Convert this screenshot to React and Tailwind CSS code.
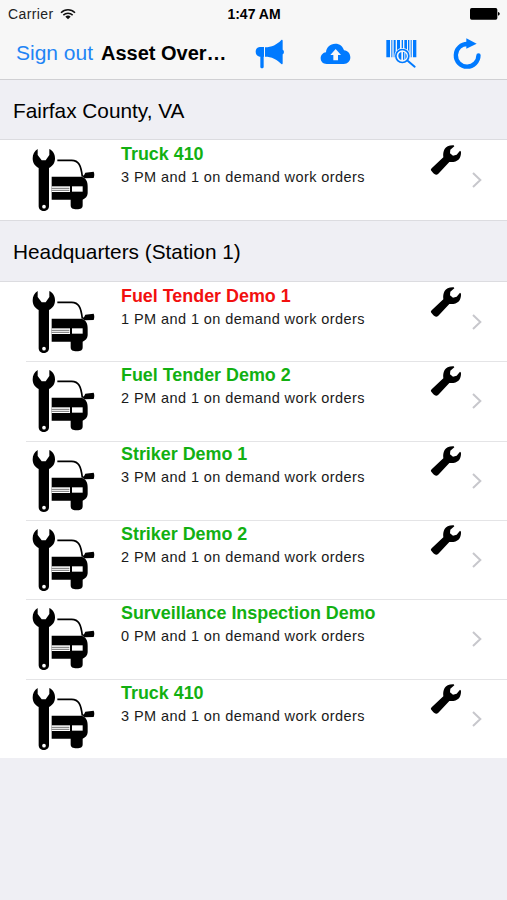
import React from 'react';

const sections = [
    {
        title: 'Fairfax County, VA',
        assets: [{ name: 'Truck 410', pm: 3, onDemand: 1, wrench: true }],
    },
    {
        title: 'Headquarters (Station 1)',
        assets: [
            { name: 'Fuel Tender Demo 1', pm: 1, onDemand: 1, wrench: true, overdue: true },
            { name: 'Fuel Tender Demo 2', pm: 2, onDemand: 1, wrench: true },
            { name: 'Striker Demo 1', pm: 3, onDemand: 1, wrench: true },
            { name: 'Striker Demo 2', pm: 2, onDemand: 1, wrench: true },
            { name: 'Surveillance Inspection Demo', pm: 0, onDemand: 1, wrench: false },
            { name: 'Truck 410', pm: 3, onDemand: 1, wrench: true },
        ],
    },
];

function WifiIcon() {
    return (
        <svg className="ml-[6px] h-[12px] w-[16px]" viewBox="0 0 48 36" fill="none" stroke="#111" strokeWidth="4.5">
            <path d="M3 14C15 2 33 2 45 14" />
            <path d="M10 21.500C18 14 30 14 38 21.500" />
            <path d="M16 26C21 21.500 27 21.500 32 26L24 34Z" fill="#111" stroke="none" />
        </svg>
    );
}

function BatteryIcon() {
    return (
        <svg className="h-[12px] w-[30px]" viewBox="0 0 90 36">
            <rect x="0" y="0" width="82" height="35" rx="5" fill="#000" />
            <path d="M84 12C91 13 91 22 84 23Z" fill="#000" />
        </svg>
    );
}

function MegaphoneIcon() {
    return (
        <svg className="h-[30px] w-[30px]" viewBox="46 29 90 90" fill="#007aff">
            <path d="M73 53H60C44 54 44 81 60 82H62V113C62 118 72 118 72 113V82H73Z" />
            <path d="M76 54C96 54 112 46 125 32C127 30 129 31 129 34V61C134 63 134 73 129 75V102C129 105 127 106 125 104C112 90 96 82 76 82Z" />
        </svg>
    );
}

function CloudUploadIcon() {
    return (
        <svg className="h-[22px] w-[31px]" viewBox="241 41 93 66">
            <path
                d="M261 104C249 104 243 96 243 87C243 77 250 70 259 69C260 54 271 43 287 43C300 43 310 51 313 63C325 64 332 73 332 84C332 96 324 104 312 104Z"
                fill="#007aff"
            />
            <path d="M288 59L304 77H295V93H281V77H272Z" fill="#f7f7f7" />
        </svg>
    );
}

function BarcodeSearchIcon() {
    return (
        <svg className="h-[30px] w-[31px]" viewBox="35 30 93 90" fill="#007aff">
            <path d="M36 33H47V85H36ZM51 33H54V85H51ZM58 33H64V85H58ZM68 33H77V85H68ZM82 33H86V85H82ZM90 33H98V85H90ZM101 33H105V85H101ZM109 33H112V85H109ZM116 33H126V85H116Z" />
            <circle cx="84" cy="81" r="24" fill="#f7f7f7" />
            <path d="M101 96L121 113" stroke="#007aff" strokeWidth="6" strokeLinecap="round" />
            <circle cx="84" cy="81" r="19.500" fill="#f7f7f7" stroke="#007aff" strokeWidth="5" />
            <path d="M81 69C70 71 69 87 79 92H81ZM86 69H90V92H86ZM93 71C99 77 98 86 93 91Z" />
        </svg>
    );
}

function RefreshIcon() {
    return (
        <svg className="h-[31px] w-[29px]" viewBox="236 27 87 93">
            <path
                d="M312.500 79A34 34 0 1 1 280 45"
                fill="none"
                stroke="#007aff"
                strokeWidth="13"
                strokeLinecap="round"
            />
            <path d="M276 28L307 44L276 59Z" fill="#007aff" />
        </svg>
    );
}

function VehicleIcon() {
    return (
        <svg className="mt-[5px] ml-[30px] h-[68px] w-[66px] shrink-0" viewBox="30 15 198 204">
            <path d="M53 27V45L65 61H77L88 45V27C100 33 105 43 105 55C105 69 98 79 87 84V199C87 218 56 218 56 199V84C45 79 38 69 38 55C38 43 43 33 53 27Z" />
            <circle cx="72" cy="200" r="5.500" fill="#fff" />
            <path d="M112 61H155C176 61 183 76 187 110" fill="none" stroke="#000" strokeWidth="5" />
            <path d="M187 107L192 106L196 98L221 95C224 102 223 108 221 114L194 115L188 111Z" />
            <path d="M95 110H184C198 113 203 124 203 140V160C203 169 196 176 188 179V196C188 205 182 208 170 208C158 208 152 205 152 196V179H95Z" />
            <path d="M95 139H150V156H95Z" fill="#fff" />
            <path d="M95 145H148M95 151H148" fill="none" stroke="#555" strokeWidth="2.500" />
            <rect x="156" y="139" width="32" height="16" fill="#fff" />
        </svg>
    );
}

function WrenchIcon() {
    return (
        <svg className="h-[32px] w-[32px]" viewBox="60 26 96 96">
            <path d="M65 99L100 66C98 48 103 29 131 30L133 33L121 43L120 54L129 61L140 58L150 46L153 49C154 70 142 82 118 80L85 115C79 121 74 118 67 110C62 105 61 103 65 99Z" />
        </svg>
    );
}

function Chevron() {
    return (
        <svg className="h-[16px] w-[10px]" viewBox="0 0 30 48" fill="none" stroke="#c7c7cc" strokeWidth="6">
            <path d="M3 3L25 24L3 45" />
        </svg>
    );
}

function AssetRow({ asset, first }) {
    return (
        <li className="flex h-[79.4px] bg-white">
            <VehicleIcon />
            <div className={`-ml-[70px] w-[70px] shrink-0 ${first ? '' : 'border-t border-[#e4e4e6]'}`}></div>
            <div className={`flex min-w-0 flex-1 border-t ${first ? 'border-transparent' : 'border-[#e4e4e6]'}`}>
                <div className="ml-[25px] w-[309px] whitespace-nowrap">
                    <h3
                        className={`pt-[0.8px] text-[17.9px] leading-[25px] font-bold ${
                            asset.overdue ? 'text-[#f2100f]' : 'text-[#12b012]'
                        }`}
                    >
                        {asset.name}
                    </h3>
                    <p className="text-[14.5px] leading-[20.5px] tracking-[0.42px] text-[#1a1a1a]">
                        {asset.pm} PM and {asset.onDemand} on demand work orders
                    </p>
                </div>
                <div className="mt-[3px] w-[32px]">{asset.wrench && <WrenchIcon />}</div>
                <div className="mt-[31px] ml-[10px]">
                    <Chevron />
                </div>
            </div>
        </li>
    );
}

export default function App() {
    return (
        <div className="flex h-[900px] w-[507px] flex-col overflow-hidden bg-[#efeff4] font-['Liberation_Sans',Arial,sans-serif] text-black">
            <header className="h-[80px] shrink-0 border-b border-[#d0d0d3] bg-[#f7f7f7]">
                <div className="grid h-[28px] grid-cols-3 items-center pr-[7px] pl-[8px] text-[14px]">
                    <div className="flex items-center">
                        <span className="tracking-[0.4px] text-[#222]">Carrier</span>
                        <WifiIcon />
                    </div>
                    <span className="text-center font-bold">1:47 AM</span>
                    <div className="flex justify-end">
                        <BatteryIcon />
                    </div>
                </div>
                <div className="flex h-[51px] items-center pl-[16px]">
                    <button className="w-[85px] pb-[2px] text-left text-[21px] whitespace-nowrap text-[#1f85f5]">
                        Sign out
                    </button>
                    <h1 className="w-[154px] pb-[2px] text-[20px] font-bold whitespace-nowrap">Asset Over…</h1>
                    <MegaphoneIcon />
                    <div className="ml-[35px] flex">
                        <CloudUploadIcon />
                    </div>
                    <div className="ml-[35px] flex">
                        <BarcodeSearchIcon />
                    </div>
                    <div className="ml-[36px] flex">
                        <RefreshIcon />
                    </div>
                </div>
            </header>

            <main>
                {sections.map((section, index) => (
                    <section key={section.title}>
                        <h2
                            className={`flex items-center border-[#dcdce0] pl-[13px] text-[20.8px] ${
                                index === 0 ? 'h-[60.4px] border-b pt-[1px]' : 'h-[62px] border-y pt-[1px]'
                            }`}
                        >
                            {section.title}
                        </h2>
                        <ul>
                            {section.assets.map((asset, i) => (
                                <AssetRow key={asset.name} asset={asset} first={i === 0} />
                            ))}
                        </ul>
                    </section>
                ))}
            </main>
        </div>
    );
}
